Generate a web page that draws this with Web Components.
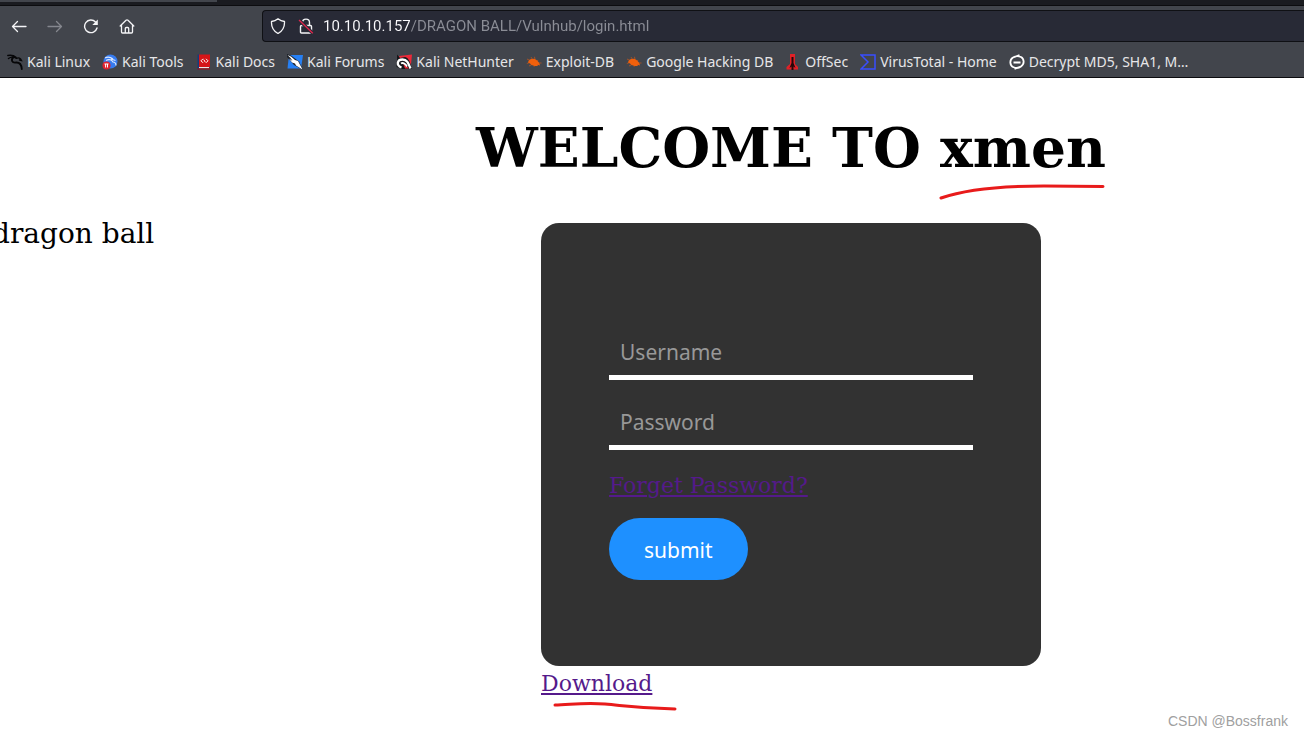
<!DOCTYPE html>
<html lang="en">
<head>
<meta charset="utf-8">
<title>Login</title>
<style>
  body {
    margin: 0;
    background: #fff;
    overflow-x: hidden;
  }
</style>
</head>
<body>
<browser-window>
  <nav-bar slot="chrome" url="10.10.10.157/DRAGON BALL/Vulnhub/login.html"></nav-bar>
  <bookmarks-bar slot="chrome">
    <bookmark-item icon="kali">Kali Linux</bookmark-item>
    <bookmark-item icon="tools">Kali Tools</bookmark-item>
    <bookmark-item icon="docs">Kali Docs</bookmark-item>
    <bookmark-item icon="forums">Kali Forums</bookmark-item>
    <bookmark-item icon="nethunter">Kali NetHunter</bookmark-item>
    <bookmark-item icon="bug">Exploit-DB</bookmark-item>
    <bookmark-item icon="bug">Google Hacking DB</bookmark-item>
    <bookmark-item icon="offsec">OffSec</bookmark-item>
    <bookmark-item icon="virustotal">VirusTotal - Home</bookmark-item>
    <bookmark-item icon="decrypt">Decrypt MD5, SHA1, M…</bookmark-item>
  </bookmarks-bar>
  <welcome-page>
    <login-card></login-card>
  </welcome-page>
</browser-window>

<script>
  const icons = {
    kali: '<g fill="none" stroke="#060608" stroke-linecap="round"><path stroke-width="1.400" d="M0.800 1.500 C4 1 7 1.500 9 3.200 M1.500 4.500 C4 2.500 7 3 9.500 4.300"/><path stroke-width="1.800" d="M6.500 3 C3.500 6 5 9 9 8.500 C12.500 8.300 14.500 10.500 14.800 15"/><path stroke-width="1.400" d="M9.500 4.300 C11.500 3.300 13.500 4.300 14.500 6.500 L12.500 6"/></g>',
    tools: '<circle cx="8.500" cy="7.500" r="7" fill="#367bf0"/><path fill="none" stroke="#dce9ff" stroke-width="1.200" d="M3 4 C6 2.500 9 3.500 11 5 M4 6.500 C7 4.500 10 6 11 8 C12.500 8 14 9.500 14 11.500 M9 5 L13.500 6.500"/><circle cx="4.500" cy="11.500" r="4" fill="#e0222f"/><path stroke="#fff" fill="none" stroke-width="1" d="M2.500 10 H6.500 M3.600 10 V13.500 M5.500 10 V13.500"/>',
    docs: '<path fill="#173a7a" d="M1.500 0.500 H3.500 V15.500 H1.500 Z"/><path fill="#d51518" d="M3 0.500 H14 V13 H3 Z"/><path fill="#e8e8ea" d="M3 13 H13 V14.300 H3 Z"/><path fill="#9e1117" d="M1.500 14.300 H14 V15.500 H1.500 Z"/><path fill="none" stroke="#fff" stroke-width="1" d="M7 4.800 L5 6.800 L7 8.800 M10 4.800 L12 6.800 L10 8.800 M7.700 5.500 L9.300 8.200"/>',
    forums: '<path fill="#2680f5" d="M2 1 H16 L14 14.500 H0.500 Z"/><path fill="#1c2028" d="M0 0 L4 1.500 L12 7.500 L16 16 L7 11 L0 3 Z"/><path fill="#fff" d="M0.500 1 L4 2.500 L8 6 L11 7 L15.500 15.500 L9 11.500 L8 9.500 L5 8.500 L2 4.500 L5.500 7 L3.500 4 Z"/>',
    nethunter: '<path fill="#ed2939" d="M3 2 L16 0.500 L14.500 15 L5 14 Z"/><path fill="#15161a" d="M1 0.500 L4 4 L9 3 C13 4 14 8 16 15 H10 L6 15 L0.500 13 L1 6 Z"/><path fill="#ed2939" d="M7 9 L13 14.500 H9 Z"/><path fill="none" stroke="#fff" stroke-width="2.300" d="M5.500 13.500 C0 11.500 1 5.500 6.500 5.500 C11.500 5.500 12.500 9.500 14.500 14.500"/><path fill="none" stroke="#fff" stroke-width="1.800" d="M5 9.500 C7 8 9.500 10 11 12.500"/>',
    bug: '<path fill="none" stroke="#b9551e" stroke-width="0.800" d="M1 5 L4 6.500 M0.800 9.500 L4 8.500 M3 12 L6 10.500 M5 3 L6.500 5.500 M8.500 2.800 L9 5.500 M8 12.800 L9 10.500 M12 6 L11 7.500 M15.500 9 L12 9"/><path fill="#f0600c" d="M2.500 7 C4 4.500 8 4 10.500 6 C12.500 7.500 13.500 9 14 11.500 L11.500 10.800 L11.800 12 C9 12.200 5.500 11.500 4 9.500 L2 8.500 Z"/>',
    offsec: '<path fill="#e02127" d="M5 0 H10 V10 L13 13 V15.500 H1.500 V13 L5 10 Z"/><path fill="#25080a" d="M6.500 3 H8.500 V9 L10.500 14 L8.500 12.500 V16 H6.500 V12.500 L4.500 14 L6.500 9 Z"/>',
    virustotal: '<path fill="none" stroke="#394eff" stroke-width="1.500" d="M1 1 H15 V15 H1 L8 8 Z"/>',
    decrypt: '<path fill="none" stroke="#fff" stroke-width="1.800" d="M4.500 8.500 H11.500 M10.500 1.200 L4 3.500 C0 6 1 11.500 4 13 M5.500 14.800 L12 12.500 C16 10 15 4.500 12 3 M4 3.500 C7 1.500 10 2 12 3 M4 13 C7 14.500 10 14 12 12.500"/>',
    back: '<path fill="none" stroke="#f4f4f6" stroke-width="1.300" stroke-linecap="round" stroke-linejoin="round" d="M15 8.500 H1.500 M6.500 3.500 L1.500 8.500 L6.500 13.500"/>',
    forward: '<path fill="none" stroke="#85878e" stroke-width="1.300" stroke-linecap="round" stroke-linejoin="round" d="M1 8.500 H14.500 M9.500 3.500 L14.500 8.500 L9.500 13.500"/>',
    reload: '<path fill="none" stroke="#f4f4f6" stroke-width="1.400" stroke-linecap="round" d="M14 10 A6.300 6.300 0 1 1 12.500 4"/><path fill="#f4f4f6" d="M14.800 1.500 V7 H9.300 Z"/>',
    home: '<path fill="none" stroke="#f4f4f6" stroke-width="1.300" stroke-linecap="round" stroke-linejoin="round" d="M1.200 8 L7 2.300 Q8 1.500 9 2.300 L14.800 8 M2.500 7 V14 Q2.500 15 3.500 15 H12.500 Q13.500 15 13.500 14 V7 M6.300 15 V10.500 Q6.300 9.500 7.300 9.500 H8.700 Q9.700 9.500 9.700 10.500 V15"/>',
    shield: '<path fill="none" stroke="#f4f4f6" stroke-width="1.300" stroke-linejoin="round" d="M8 0.800 C10 2.500 12 3.300 14.500 3.500 C14.800 9 12.500 13 8 15.500 C3.500 13 1.200 9 1.500 3.500 C4 3.300 6 2.500 8 0.800 Z"/>',
    lock: '<path fill="none" stroke="#f4f4f6" stroke-width="1.400" d="M4.500 7.500 V4.500 C4.500 0 11.500 0 11.500 4.500 V7.500 M3.500 7.500 H12.500 Q13.500 7.500 13.500 8.500 V14 Q13.500 15 12.500 15 H3.500 Q2.500 15 2.500 14 V8.500 Q2.500 7.500 3.500 7.500"/><path stroke="#282a36" stroke-width="3.500" d="M1 2 L14.800 15.200"/><path stroke="#e2264d" stroke-width="1.300" d="M1 2 L14.800 15.200"/>'
  };

  const svg = (name) => `<svg viewBox="0 0 16 16" width="16" height="16" aria-hidden="true">${icons[name]}</svg>`;

  class BrowserWindow extends HTMLElement {
    constructor() {
      super();
      this.attachShadow({ mode: 'open' });
    }

    connectedCallback() {
      this.shadowRoot.innerHTML = `
        <style>
          :host {
            display: block;
            position: relative;
            min-height: 100vh;
          }
          header {
            background: #42454c;
            border-bottom: 1px solid #0c0c0f;
          }
          .tabs {
            display: flex;
            height: 5px;
            background: #1a1b20;
            border-bottom: 1px solid #0c0c0f;
          }
          .tab {
            width: 217px;
            height: 2px;
            background: #42454c;
          }
          .watermark {
            position: absolute;
            right: 16px;
            bottom: 6px;
            font: 14px/18px "Liberation Sans", Arial, sans-serif;
            color: #a0a0a0;
          }
        </style>
        <header>
          <div class="tabs"><div class="tab"></div></div>
          <slot name="chrome"></slot>
        </header>
        <slot></slot>
        <div class="watermark">CSDN @Bossfrank</div>
      `;
    }
  }

  class NavBar extends HTMLElement {
    constructor() {
      super();
      this.attachShadow({ mode: 'open' });
    }

    connectedCallback() {
      this.shadowRoot.innerHTML = `
        <style>
          :host {
            display: flex;
            align-items: center;
            height: 40px;
            padding-left: 1px;
          }
          button {
            display: flex;
            justify-content: center;
            width: 36px;
            padding: 0;
            border: 0;
            background: none;
          }
          .url {
            display: flex;
            flex: 1;
            align-items: center;
            gap: 12px;
            box-sizing: border-box;
            height: 32px;
            margin-left: 117px;
            padding-left: 7px;
            border: 1px solid #0f1014;
            border-right: 0;
            border-radius: 4px 0 0 4px;
            background: #282a36;
          }
          .url svg {
            flex: none;
          }
          /* host part is bright, the path is dimmed */
          input {
            flex: 1;
            min-width: 0;
            margin-left: -3px;
            padding: 0;
            border: 0;
            outline: 0;
            font: 15px/20px Roboto, "Noto Sans", sans-serif;
            color: transparent;
            background: linear-gradient(90deg, #fbfbfe 87px, #8b8d96 87px);
            -webkit-background-clip: text;
            background-clip: text;
          }
        </style>
        <button aria-label="Back">${svg('back')}</button>
        <button aria-label="Forward">${svg('forward')}</button>
        <button aria-label="Reload">${svg('reload')}</button>
        <button aria-label="Home">${svg('home')}</button>
        <div class="url">
          ${svg('shield')}
          ${svg('lock')}
          <input type="text" aria-label="Address" value="${this.getAttribute('url')}">
        </div>
      `;
    }
  }

  class BookmarksBar extends HTMLElement {
    constructor() {
      super();
      this.attachShadow({ mode: 'open' });
      this.shadowRoot.innerHTML = `
        <style>
          :host {
            display: flex;
            align-items: center;
            gap: 12px;
            height: 31px;
            padding-left: 7px;
            overflow: hidden;
          }
        </style>
        <slot></slot>
      `;
    }
  }

  class BookmarkItem extends HTMLElement {
    constructor() {
      super();
      this.attachShadow({ mode: 'open' });
    }

    connectedCallback() {
      this.shadowRoot.innerHTML = `
        <style>
          :host {
            display: block;
            flex: none;
          }
          a {
            display: flex;
            align-items: center;
            gap: 4px;
            font: 14px/20px "Noto Sans", sans-serif;
            color: #e6e6e8;
            text-decoration: none;
          }
        </style>
        <a href="#">${svg(this.getAttribute('icon'))}<span><slot></slot></span></a>
      `;
    }
  }

  class WelcomePage extends HTMLElement {
    constructor() {
      super();
      this.attachShadow({ mode: 'open' });
    }

    connectedCallback() {
      this.shadowRoot.innerHTML = `
        <style>
          :host {
            display: grid;
            grid-template-columns: 278px 1fr;
            row-gap: 37px;
            padding-top: 38px;
            font-family: "DejaVu Serif", serif;
            color: #000;
          }
          h1 {
            grid-column: 2;
            margin: 0;
            font-size: 55px;
            line-height: 64px;
            text-align: center;
            white-space: nowrap;
          }
          p {
            margin: 0 0 0 -8px;
            font-size: 28px;
            line-height: 33px;
          }
          main {
            display: flex;
            flex-direction: column;
            width: 500px;
            margin: 0 auto;
            padding-top: 6px;
          }
          .download {
            align-self: flex-start;
            margin-top: 5px;
            font-size: 22px;
            line-height: 26px;
            color: #551a8b;
          }
          .marked {
            position: relative;
          }
          .marked svg {
            position: absolute;
            left: 0;
            top: 100%;
            fill: none;
            stroke: #e81b1b;
            stroke-width: 3;
            stroke-linecap: round;
            overflow: visible;
          }
        </style>
        <h1>WELCOME TO <span class="marked">xmen<svg width="166" height="20"><path d="M1 18 C27 9 61 6 104 6 L163 6.500"/></svg></span></h1>
        <p>dragon ball</p>
        <main>
          <slot></slot>
          <a class="download marked" href="#">Download<svg width="136" height="16"><path d="M14 8 C28 8 42 5 64 7 S96 11 134 12"/></svg></a>
        </main>
      `;
    }
  }

  class LoginCard extends HTMLElement {
    constructor() {
      super();
      this.attachShadow({ mode: 'open' });
    }

    connectedCallback() {
      this.shadowRoot.innerHTML = `
        <style>
          :host {
            display: block;
            padding: 102px 68px 86px;
            border-radius: 18px;
            background: #323232;
          }
          form {
            display: flex;
            flex-direction: column;
            align-items: flex-start;
          }
          input {
            box-sizing: border-box;
            width: 100%;
            height: 55px;
            margin: 0 0 15px;
            padding: 3px 11px 0;
            border: 0;
            border-bottom: 5px solid #fff;
            outline: 0;
            background: none;
            color: #fff;
          }
          input, button {
            font: 21px/28px "Noto Sans", sans-serif;
          }
          input::placeholder {
            color: #989898;
            opacity: 1;
          }
          a {
            margin: 8px 0 19px;
            font-size: 22px;
            line-height: 26px;
            color: #551a8b;
          }
          button {
            height: 62px;
            padding: 2px 35px 0;
            border: 0;
            border-radius: 31px;
            background: #1e90ff;
            color: #fff;
          }
        </style>
        <form>
          <input type="text" placeholder="Username" aria-label="Username">
          <input type="password" placeholder="Password" aria-label="Password">
          <a href="#">Forget Password?</a>
          <button type="button">submit</button>
        </form>
      `;
    }
  }

  customElements.define('browser-window', BrowserWindow);
  customElements.define('nav-bar', NavBar);
  customElements.define('bookmarks-bar', BookmarksBar);
  customElements.define('bookmark-item', BookmarkItem);
  customElements.define('welcome-page', WelcomePage);
  customElements.define('login-card', LoginCard);
</script>
</body>
</html>
